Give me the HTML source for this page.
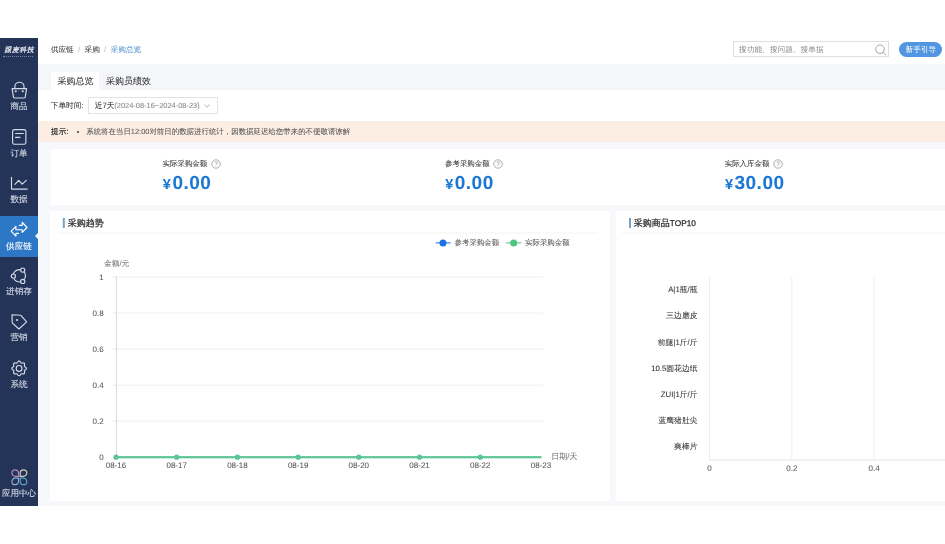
<!DOCTYPE html>
<html><head><meta charset="utf-8">
<style>
*{box-sizing:border-box;margin:0;padding:0}
html,body{width:945px;height:544px;overflow:hidden;background:#fff}
#root{position:absolute;left:0;top:0;width:945px;height:544px;will-change:transform}
body{font-family:"Liberation Sans",sans-serif;color:#333;position:relative;text-rendering:geometricPrecision;-webkit-font-smoothing:antialiased}
.a{position:absolute;white-space:nowrap}
.t{position:absolute;white-space:nowrap;line-height:1;-webkit-text-stroke:0.06px currentColor}
.nav{position:absolute;left:0;width:38px;text-align:center;color:#d3d9e5;font-size:8.6px;line-height:10px;-webkit-text-stroke:0.12px currentColor}
.card{position:absolute;background:#fff}
</style></head><body><div id="root">
<div class="a" style="left:0;top:38px;width:38px;height:467.5px;background:#243458"></div>
<div class="a" style="left:38px;top:38px;width:907px;height:26px;background:#fff"></div>
<div class="a" style="left:38px;top:64px;width:907px;height:26px;background:#f5f6f9"></div>
<div class="a" style="left:38px;top:90px;width:907px;height:31px;background:#fff"></div>
<div class="a" style="left:38px;top:121px;width:907px;height:21px;background:#fdeee4"></div>
<div class="a" style="left:38px;top:142px;width:907px;height:363.5px;background:#f7f8fb"></div>
<div class="card" style="left:51px;top:149px;width:894px;height:56px"></div>
<div class="card" style="left:50px;top:211px;width:560px;height:290px"></div>
<div class="card" style="left:616px;top:211px;width:329px;height:290px"></div>
<div class="t" style="left:3.6px;top:48px;font-size:6.9px;color:#e3e7ef;letter-spacing:0.55px;transform:skewX(-12deg);transform-origin:0 100%;-webkit-text-stroke:0.25px #e3e7ef">跟麦科技</div>
<div class="a" style="left:3px;top:55.5px;width:30px;height:1.5px;border-top:1.5px dotted #7d87a3"></div>
<div class="a" style="left:0;top:216px;width:38px;height:41px;background:#2c77c6"></div>
<div class="a" style="left:35px;top:233px;width:0;height:0;border-top:3px solid transparent;border-bottom:3px solid transparent;border-right:3px solid #f7f8fb"></div>
<div class="nav" style="top:100.5px;">商品</div>
<div class="nav" style="top:147.6px;">订单</div>
<div class="nav" style="top:193.6px;">数据</div>
<div class="nav" style="top:240.5px;color:#fff;">供应链</div>
<div class="nav" style="top:286px;">进销存</div>
<div class="nav" style="top:332.3px;">营销</div>
<div class="nav" style="top:378.6px;">系统</div>
<div class="nav" style="top:488.3px;">应用中心</div>
<svg class="a" style="left:0;top:0" width="38" height="505" viewBox="0 0 38 505">
<g fill="none" stroke="#d5dae6" stroke-width="1.15" stroke-linejoin="round" stroke-linecap="round">
<path d="M14.9 88.6V86.6a4.55 4.4 0 0 1 9.1 0V88.6"/>
<path d="M12.1 88.6H26.6L25.2 97.2a1 1 0 0 1-1 .8H14.5a1 1 0 0 1-1-.8Z"/>
<rect x="12.6" y="129.6" width="13.3" height="14.6" rx="1.8"/>
<line x1="15.6" y1="133.5" x2="23.3" y2="133.5"/><line x1="15.6" y1="137.4" x2="19.9" y2="137.4"/>
<path d="M11.5 177.2V189.1H27.3"/><path d="M14.9 184.3L18.7 180.4L22.2 184.2L26.3 180.4"/>
<path stroke="#fff" d="M19.3 225.3H22.2V222.25L27 227.5L22.2 232.4V229.7H15.9V226.3L11.2 231.2L15.9 236.2V233.4H18.5"/>
<circle cx="19.3" cy="275.8" r="6.2"/>
<path d="M12 314.7L20.6 315.2L26.6 321.9L18.9 329L12.2 322.8Z"/>
<path d="M26.40 368.40 L26.36 368.69 L26.23 368.96 L26.04 369.22 L25.80 369.46 L25.52 369.68 L25.24 369.87 L24.98 370.06 L24.75 370.24 L24.58 370.42 L24.46 370.62 L24.40 370.84 L24.40 371.10 L24.43 371.39 L24.49 371.70 L24.55 372.04 L24.59 372.39 L24.59 372.73 L24.54 373.05 L24.43 373.33 L24.26 373.56 L24.03 373.73 L23.75 373.84 L23.43 373.89 L23.09 373.89 L22.74 373.85 L22.40 373.79 L22.09 373.73 L21.80 373.70 L21.54 373.70 L21.32 373.76 L21.12 373.88 L20.94 374.05 L20.76 374.28 L20.57 374.54 L20.38 374.82 L20.16 375.10 L19.92 375.34 L19.66 375.53 L19.39 375.66 L19.10 375.70 L18.81 375.66 L18.54 375.53 L18.28 375.34 L18.04 375.10 L17.82 374.82 L17.63 374.54 L17.44 374.28 L17.26 374.05 L17.08 373.88 L16.88 373.76 L16.66 373.70 L16.40 373.70 L16.11 373.73 L15.80 373.79 L15.46 373.85 L15.11 373.89 L14.77 373.89 L14.45 373.84 L14.17 373.73 L13.94 373.56 L13.77 373.33 L13.66 373.05 L13.61 372.73 L13.61 372.39 L13.65 372.04 L13.71 371.70 L13.77 371.39 L13.80 371.10 L13.80 370.84 L13.74 370.62 L13.62 370.42 L13.45 370.24 L13.22 370.06 L12.96 369.87 L12.68 369.68 L12.40 369.46 L12.16 369.22 L11.97 368.96 L11.84 368.69 L11.80 368.40 L11.84 368.11 L11.97 367.84 L12.16 367.58 L12.40 367.34 L12.68 367.12 L12.96 366.93 L13.22 366.74 L13.45 366.56 L13.62 366.38 L13.74 366.18 L13.80 365.96 L13.80 365.70 L13.77 365.41 L13.71 365.10 L13.65 364.76 L13.61 364.41 L13.61 364.07 L13.66 363.75 L13.77 363.47 L13.94 363.24 L14.17 363.07 L14.45 362.96 L14.77 362.91 L15.11 362.91 L15.46 362.95 L15.80 363.01 L16.11 363.07 L16.40 363.10 L16.66 363.10 L16.88 363.04 L17.08 362.92 L17.26 362.75 L17.44 362.52 L17.63 362.26 L17.82 361.98 L18.04 361.70 L18.28 361.46 L18.54 361.27 L18.81 361.14 L19.10 361.10 L19.39 361.14 L19.66 361.27 L19.92 361.46 L20.16 361.70 L20.38 361.98 L20.57 362.26 L20.76 362.52 L20.94 362.75 L21.12 362.92 L21.32 363.04 L21.54 363.10 L21.80 363.10 L22.09 363.07 L22.40 363.01 L22.74 362.95 L23.09 362.91 L23.43 362.91 L23.75 362.96 L24.03 363.07 L24.26 363.24 L24.43 363.47 L24.54 363.75 L24.59 364.07 L24.59 364.41 L24.55 364.76 L24.49 365.10 L24.43 365.41 L24.40 365.70 L24.40 365.96 L24.46 366.18 L24.58 366.38 L24.75 366.56 L24.98 366.74 L25.24 366.93 L25.52 367.12 L25.80 367.34 L26.04 367.58 L26.23 367.84 L26.36 368.11 L26.40 368.40Z"/>
<circle cx="19.1" cy="368.4" r="2.9"/>
</g>
<g fill="#243458" stroke="#d5dae6" stroke-width="1.15"><circle cx="13.4" cy="276.1" r="2.1"/><circle cx="22.7" cy="270.1" r="2.1"/><circle cx="22.7" cy="281.4" r="2.1"/></g>
<circle cx="17" cy="320" r="1.1" fill="#d5dae6"/>
<circle cx="15.8" cy="91.3" r="1.05" fill="#d5dae6"/><circle cx="22.8" cy="91.3" r="1.05" fill="#d5dae6"/>
<g fill="none" stroke-width="1.15">
<path stroke="#b58bb5" d="M18.5 476.4H15.2a3.3 3.3 0 1 1 3.3-3.3z"/>
<path stroke="#d6d1bf" d="M20.2 476.4h3.3a3.3 3.3 0 1 0-3.3-3.3z"/>
<path stroke="#8cafdc" d="M18.5 478.1H15.2a3.3 3.3 0 1 0 3.3 3.3z"/>
<path stroke="#5c9ec0" d="M20.2 478.1h3.3a3.3 3.3 0 1 1-3.3 3.3z"/>
</g>
</svg>
<div class="t" style="left:50.7px;top:45.5px;font-size:7.7px;color:#444">供应链 <span style="color:#bbb">&nbsp;/&nbsp;</span> 采购 <span style="color:#bbb">&nbsp;/&nbsp;</span> <span style="color:#5a9bd5">采购总览</span></div>
<div class="a" style="left:733px;top:41px;width:156px;height:16px;border:1px solid #dcdfe6;background:#fff"></div>
<div class="t" style="left:739px;top:46px;font-size:7.7px;color:#8a8a8a;-webkit-text-stroke:0">搜功能、搜问题、搜单据</div>
<svg class="a" style="left:874px;top:42.5px" width="13" height="13" viewBox="0 0 13 13"><circle cx="6" cy="6.2" r="4.3" fill="none" stroke="#999" stroke-width="0.9"/><line x1="9.1" y1="9.3" x2="12" y2="12.2" stroke="#999" stroke-width="0.9"/></svg>
<div class="a" style="left:898.6px;top:42px;width:43.6px;height:15px;border-radius:8px;background:#5296e2"></div>
<div class="t" style="left:905.5px;top:46px;font-size:7.7px;color:#fff;-webkit-text-stroke:0">新手引导</div>
<div class="a" style="left:51px;top:71.5px;width:48px;height:18.5px;background:#fff"></div>
<div class="t" style="left:57.5px;top:77px;font-size:9px;color:#333">采购总览</div>
<div class="t" style="left:106px;top:77px;font-size:9px;color:#333">采购员绩效</div>
<div class="t" style="left:50.7px;top:102px;font-size:7.7px;color:#333">下单时间:</div>
<div class="a" style="left:88px;top:97.3px;width:129.5px;height:17px;border:1px solid #e1e3e8"></div>
<div class="t" style="left:94.7px;top:102px;font-size:7.7px;color:#333">近7天<span style="color:#888;font-size:7.45px">(2024-08-16~2024-08-23)</span></div>
<svg class="a" style="left:204px;top:104px" width="6" height="4" viewBox="0 0 6 4"><polyline points="0.5,0.8 3,3.2 5.5,0.8" fill="none" stroke="#999" stroke-width="0.8"/></svg>
<div class="t" style="left:51px;top:128px;font-size:7.7px;color:#333;-webkit-text-stroke:0.2px #333">提示:</div>
<div class="a" style="left:76.5px;top:130.5px;width:2.4px;height:2.4px;border-radius:50%;background:#333"></div>
<div class="t" style="left:86.2px;top:128px;font-size:7.45px;color:#555">系统将在当日12:00对前日的数据进行统计，因数据延迟给您带来的不便敬请谅解</div>
<div class="t" style="left:162.6px;top:160px;font-size:7.45px;color:#333">实际采购金额</div>
<svg class="a" style="left:210.8px;top:158.9px" width="10" height="10" viewBox="0 0 10 10"><circle cx="5" cy="5" r="4.2" fill="none" stroke="#999" stroke-width="0.8"/><text x="5" y="7.3" font-size="6.5" text-anchor="middle" fill="#888" font-family="Liberation Sans">?</text></svg>
<div class="t" style="left:162.8px;top:173.7px;font-size:19px;letter-spacing:0.5px;font-weight:bold;color:#1a78d2"><span style="font-size:14.5px;letter-spacing:1.5px">¥</span>0.00</div>
<div class="t" style="left:445px;top:160px;font-size:7.45px;color:#333">参考采购金额</div>
<svg class="a" style="left:493.2px;top:158.9px" width="10" height="10" viewBox="0 0 10 10"><circle cx="5" cy="5" r="4.2" fill="none" stroke="#999" stroke-width="0.8"/><text x="5" y="7.3" font-size="6.5" text-anchor="middle" fill="#888" font-family="Liberation Sans">?</text></svg>
<div class="t" style="left:445.2px;top:173.7px;font-size:19px;letter-spacing:0.5px;font-weight:bold;color:#1a78d2"><span style="font-size:14.5px;letter-spacing:1.5px">¥</span>0.00</div>
<div class="t" style="left:724.7px;top:160px;font-size:7.45px;color:#333">实际入库金额</div>
<svg class="a" style="left:772.9000000000001px;top:158.9px" width="10" height="10" viewBox="0 0 10 10"><circle cx="5" cy="5" r="4.2" fill="none" stroke="#999" stroke-width="0.8"/><text x="5" y="7.3" font-size="6.5" text-anchor="middle" fill="#888" font-family="Liberation Sans">?</text></svg>
<div class="t" style="left:724.9px;top:173.7px;font-size:19px;letter-spacing:0.5px;font-weight:bold;color:#1a78d2"><span style="font-size:14.5px;letter-spacing:1.5px">¥</span>30.00</div>
<svg class="a" style="left:0;top:0" width="945" height="544" viewBox="0 0 945 544" font-family="Liberation Sans">
<rect x="62.8" y="218" width="2" height="10" fill="#78a2c0"/>
<rect x="629" y="218" width="2" height="10" fill="#78a2c0"/>
<rect x="58" y="232.5" width="540" height="1" fill="#f3f4f6"/>
<rect x="622" y="232.5" width="323" height="1" fill="#f3f4f6"/>
<rect x="116.5" y="420.66" width="427" height="1" fill="#eeeff1"/>
<rect x="113" y="420.66" width="3.5" height="1" fill="#e2e3e5"/>
<rect x="116.5" y="384.62" width="427" height="1" fill="#eeeff1"/>
<rect x="113" y="384.62" width="3.5" height="1" fill="#e2e3e5"/>
<rect x="116.5" y="348.58" width="427" height="1" fill="#eeeff1"/>
<rect x="113" y="348.58" width="3.5" height="1" fill="#e2e3e5"/>
<rect x="116.5" y="312.54" width="427" height="1" fill="#eeeff1"/>
<rect x="113" y="312.54" width="3.5" height="1" fill="#e2e3e5"/>
<rect x="116.5" y="276.50" width="427" height="1" fill="#eeeff1"/>
<rect x="113" y="276.50" width="3.5" height="1" fill="#e2e3e5"/>
<rect x="116" y="276.50" width="1" height="180.20" fill="#dcdcdc"/>
<rect x="116" y="456.10" width="425.5" height="2.2" fill="#5cc594"/>
<circle cx="116.00" cy="457.20" r="2.6" fill="#5cc594"/>
<circle cx="176.71" cy="457.20" r="2.6" fill="#5cc594"/>
<circle cx="237.42" cy="457.20" r="2.6" fill="#5cc594"/>
<circle cx="298.13" cy="457.20" r="2.6" fill="#5cc594"/>
<circle cx="358.84" cy="457.20" r="2.6" fill="#5cc594"/>
<circle cx="419.55" cy="457.20" r="2.6" fill="#5cc594"/>
<circle cx="480.26" cy="457.20" r="2.6" fill="#5cc594"/>
<text x="103.7" y="460.10" font-size="8.0" text-anchor="end" fill="#555" stroke="#555" stroke-width="0.06">0</text>
<text x="103.7" y="424.06" font-size="8.0" text-anchor="end" fill="#555" stroke="#555" stroke-width="0.06">0.2</text>
<text x="103.7" y="388.02" font-size="8.0" text-anchor="end" fill="#555" stroke="#555" stroke-width="0.06">0.4</text>
<text x="103.7" y="351.98" font-size="8.0" text-anchor="end" fill="#555" stroke="#555" stroke-width="0.06">0.6</text>
<text x="103.7" y="315.94" font-size="8.0" text-anchor="end" fill="#555" stroke="#555" stroke-width="0.06">0.8</text>
<text x="103.7" y="279.90" font-size="8.0" text-anchor="end" fill="#555" stroke="#555" stroke-width="0.06">1</text>
<text x="116.00" y="468.2" font-size="8.0" text-anchor="middle" fill="#555" stroke="#555" stroke-width="0.06">08-16</text>
<text x="176.71" y="468.2" font-size="8.0" text-anchor="middle" fill="#555" stroke="#555" stroke-width="0.06">08-17</text>
<text x="237.42" y="468.2" font-size="8.0" text-anchor="middle" fill="#555" stroke="#555" stroke-width="0.06">08-18</text>
<text x="298.13" y="468.2" font-size="8.0" text-anchor="middle" fill="#555" stroke="#555" stroke-width="0.06">08-19</text>
<text x="358.84" y="468.2" font-size="8.0" text-anchor="middle" fill="#555" stroke="#555" stroke-width="0.06">08-20</text>
<text x="419.55" y="468.2" font-size="8.0" text-anchor="middle" fill="#555" stroke="#555" stroke-width="0.06">08-21</text>
<text x="480.26" y="468.2" font-size="8.0" text-anchor="middle" fill="#555" stroke="#555" stroke-width="0.06">08-22</text>
<text x="540.97" y="468.2" font-size="8.0" text-anchor="middle" fill="#555" stroke="#555" stroke-width="0.06">08-23</text>
<rect x="709.00" y="276.5" width="1" height="183.5" fill="#eeeff1"/>
<rect x="791.30" y="276.5" width="1" height="183.5" fill="#eeeff1"/>
<rect x="873.60" y="276.5" width="1" height="183.5" fill="#eeeff1"/>
<rect x="955.90" y="276.5" width="1" height="183.5" fill="#eeeff1"/>
<rect x="709" y="459.5" width="236" height="1" fill="#e4e5e7"/>
<text x="709.50" y="470.7" font-size="8.0" text-anchor="middle" fill="#555" stroke="#555" stroke-width="0.06">0</text>
<text x="791.80" y="470.7" font-size="8.0" text-anchor="middle" fill="#555" stroke="#555" stroke-width="0.06">0.2</text>
<text x="874.10" y="470.7" font-size="8.0" text-anchor="middle" fill="#555" stroke="#555" stroke-width="0.06">0.4</text>
<rect x="435.6" y="242.4" width="15" height="1" fill="#1a73e0"/><circle cx="443" cy="242.9" r="3.5" fill="#1a73e0"/>
<rect x="505.9" y="242.4" width="15.4" height="1" fill="#4cc57f"/><circle cx="513.7" cy="242.9" r="3.5" fill="#4cc57f"/>
</svg>
<div class="t" style="left:67.8px;top:219.3px;font-size:9px;color:#2a2a2a;-webkit-text-stroke:0.25px #2a2a2a">采购趋势</div>
<div class="t" style="left:633.8px;top:219px;font-size:9px;color:#2a2a2a;-webkit-text-stroke:0.25px #2a2a2a">采购商品<span style="font-size:8.3px">TOP10</span></div>
<div class="t" style="left:454.6px;top:239px;font-size:7.45px;color:#555">参考采购金额</div>
<div class="t" style="left:525px;top:239px;font-size:7.45px;color:#555">实际采购金额</div>
<div class="t" style="left:104px;top:260.4px;font-size:7.7px;color:#777">金额/元</div>
<div class="t" style="left:551.3px;top:452.5px;font-size:8.0px;color:#777">日期/天</div>
<div class="t" style="right:247.5px;top:286.20px;font-size:7.8px;color:#333">A|1瓶/瓶</div>
<div class="t" style="right:247.5px;top:312.40px;font-size:7.8px;color:#333">三边磨皮</div>
<div class="t" style="right:247.5px;top:338.60px;font-size:7.8px;color:#333">前腿|1斤/斤</div>
<div class="t" style="right:247.5px;top:364.80px;font-size:7.8px;color:#333">10.5圆花边纸</div>
<div class="t" style="right:247.5px;top:391.00px;font-size:7.8px;color:#333">ZUI|1斤/斤</div>
<div class="t" style="right:247.5px;top:417.20px;font-size:7.8px;color:#333">蓝鹰猪肚尖</div>
<div class="t" style="right:247.5px;top:443.40px;font-size:7.8px;color:#333">爽棒片</div>
</div></body></html>
